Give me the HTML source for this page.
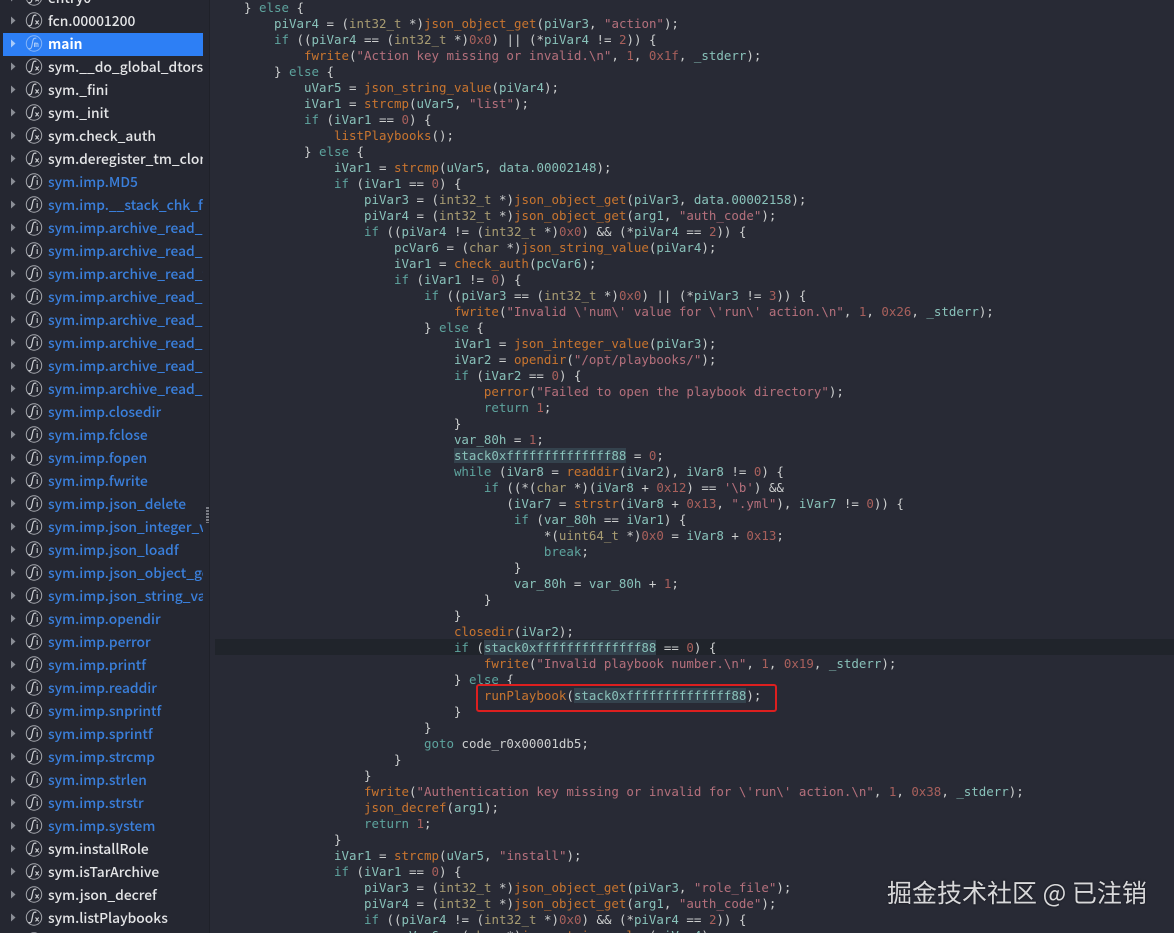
<!DOCTYPE html>
<html lang="en"><head><meta charset="utf-8"><title>Decompiler</title>
<style>
html,body{margin:0;padding:0;background:#282a35}
#app{position:relative;width:1174px;height:933px;overflow:hidden;background:#282a35}
#side{position:absolute;left:0;top:0;width:209px;height:933px;background:#252731;border-right:1px solid #1f2129}
#rows{position:absolute;left:0;top:-13px;width:203px;overflow:hidden}
.r{position:relative;height:23px;width:203px;font:500 13.8px/22px "Noto Sans CJK SC","Liberation Sans",sans-serif;color:#e4e5e7;white-space:nowrap;overflow:hidden}
.r span{position:absolute;left:48px;top:-1px}
.r svg{position:absolute;left:0;top:0}
.b{color:#3a7fdb}
.sel{background:#2d7ff5;margin-left:3px;width:200px;color:#fff;font-weight:700}
.sel span{left:45px}.sel svg{left:-3px}
#grip{position:absolute;left:206px;top:507px;width:3px;height:16px;background:repeating-linear-gradient(#7a7c84 0 2px,transparent 2px 3px)}
#hl{position:absolute;left:215px;top:639px;width:959px;height:16px;background:#20242b}
pre{position:absolute;left:244px;top:0;margin:0;font:12.46px/16px "DejaVu Sans Mono","Liberation Mono",monospace;color:#cdcfcf}
i{font-style:normal}
.v{color:#89c2ba}.k{color:#5ea49e}.f{color:#c9752f}.s{color:#b5707c}.n{color:#a8605c}.t{color:#a89c72}
.h{background:#34424d;color:#89c2ba}
#box{position:absolute;left:476px;top:684px;width:297px;height:24px;border:2px solid #dd1f1f;border-radius:3px}
#wm{position:absolute;left:887px;top:874px;font:25px/36px "Noto Sans CJK SC","Liberation Sans",sans-serif;color:#d8d8da;white-space:nowrap;text-shadow:0 0 2px rgba(0,0,0,.5)}
</style></head><body><div id="app">
<svg width="0" height="0" style="position:absolute">
<defs>
<g id="ar"><path d="M11 6.500l4.500 4-4.500 4z" fill="#8b8e96"/></g>
<g id="fx"><use href="#ar"/><circle cx="34" cy="10.500" r="7.700" fill="none" stroke="#a6a8ae" stroke-width="1"/><path d="M28.500 15.500c2.200 .8 3-.5 3.400-3l1-5c.4-2 1.500-2.800 3.500-2.200" fill="none" stroke="#d0d2d6" stroke-width="1.200"/><path d="M35.500 10.500l3.200 3.800M38.700 10.500l-3.200 3.800" fill="none" stroke="#d0d2d6" stroke-width="1.100"/></g>
<g id="fi"><use href="#ar"/><circle cx="34" cy="10.500" r="7.700" fill="none" stroke="#a6a8ae" stroke-width="1"/><path d="M28.500 15.500c2.200 .8 3-.5 3.400-3l1-5c.4-2 1.500-2.800 3.500-2.200" fill="none" stroke="#d0d2d6" stroke-width="1.200"/><path d="M37.200 9v5M37.200 6.500v1" fill="none" stroke="#d0d2d6" stroke-width="1.100"/></g>
<g id="fm"><path d="M11 6.500l4.500 4-4.500 4z" fill="#a9cbfa"/><circle cx="34" cy="10.500" r="7.700" fill="none" stroke="#86b5f8" stroke-width="1"/><path d="M28.500 15.500c2.200 .8 3-.5 3.400-3l1-5c.4-2 1.500-2.800 3.500-2.200M34.500 14v-3.800c1-.6 1.500 0 1.500 .8v3M36 10.500c1-.8 2-.3 2 .6v2.900" fill="none" stroke="#a9cbfa" stroke-width="1"/></g>
</defs></svg>
<div id="side"><div id="rows">
<div class="r"><svg width="50" height="23"><use href="#fx"/></svg><span>entry0</span></div>
<div class="r"><svg width="50" height="23"><use href="#fx"/></svg><span>fcn.00001200</span></div>
<div class="r sel"><svg width="50" height="23"><use href="#fm"/></svg><span>main</span></div>
<div class="r"><svg width="50" height="23"><use href="#fx"/></svg><span>sym.__do_global_dtors_aux</span></div>
<div class="r"><svg width="50" height="23"><use href="#fx"/></svg><span>sym._fini</span></div>
<div class="r"><svg width="50" height="23"><use href="#fx"/></svg><span>sym._init</span></div>
<div class="r"><svg width="50" height="23"><use href="#fx"/></svg><span>sym.check_auth</span></div>
<div class="r"><svg width="50" height="23"><use href="#fx"/></svg><span>sym.deregister_tm_clones</span></div>
<div class="r b"><svg width="50" height="23"><use href="#fi"/></svg><span>sym.imp.MD5</span></div>
<div class="r b"><svg width="50" height="23"><use href="#fi"/></svg><span>sym.imp.__stack_chk_fail</span></div>
<div class="r b"><svg width="50" height="23"><use href="#fi"/></svg><span>sym.imp.archive_read_data</span></div>
<div class="r b"><svg width="50" height="23"><use href="#fi"/></svg><span>sym.imp.archive_read_data</span></div>
<div class="r b"><svg width="50" height="23"><use href="#fi"/></svg><span>sym.imp.archive_read_free</span></div>
<div class="r b"><svg width="50" height="23"><use href="#fi"/></svg><span>sym.imp.archive_read_new</span></div>
<div class="r b"><svg width="50" height="23"><use href="#fi"/></svg><span>sym.imp.archive_read_next</span></div>
<div class="r b"><svg width="50" height="23"><use href="#fi"/></svg><span>sym.imp.archive_read_open</span></div>
<div class="r b"><svg width="50" height="23"><use href="#fi"/></svg><span>sym.imp.archive_read_supp</span></div>
<div class="r b"><svg width="50" height="23"><use href="#fi"/></svg><span>sym.imp.archive_read_supp</span></div>
<div class="r b"><svg width="50" height="23"><use href="#fi"/></svg><span>sym.imp.closedir</span></div>
<div class="r b"><svg width="50" height="23"><use href="#fi"/></svg><span>sym.imp.fclose</span></div>
<div class="r b"><svg width="50" height="23"><use href="#fi"/></svg><span>sym.imp.fopen</span></div>
<div class="r b"><svg width="50" height="23"><use href="#fi"/></svg><span>sym.imp.fwrite</span></div>
<div class="r b"><svg width="50" height="23"><use href="#fi"/></svg><span>sym.imp.json_delete</span></div>
<div class="r b"><svg width="50" height="23"><use href="#fi"/></svg><span>sym.imp.json_integer_value</span></div>
<div class="r b"><svg width="50" height="23"><use href="#fi"/></svg><span>sym.imp.json_loadf</span></div>
<div class="r b"><svg width="50" height="23"><use href="#fi"/></svg><span>sym.imp.json_object_get</span></div>
<div class="r b"><svg width="50" height="23"><use href="#fi"/></svg><span>sym.imp.json_string_value</span></div>
<div class="r b"><svg width="50" height="23"><use href="#fi"/></svg><span>sym.imp.opendir</span></div>
<div class="r b"><svg width="50" height="23"><use href="#fi"/></svg><span>sym.imp.perror</span></div>
<div class="r b"><svg width="50" height="23"><use href="#fi"/></svg><span>sym.imp.printf</span></div>
<div class="r b"><svg width="50" height="23"><use href="#fi"/></svg><span>sym.imp.readdir</span></div>
<div class="r b"><svg width="50" height="23"><use href="#fi"/></svg><span>sym.imp.snprintf</span></div>
<div class="r b"><svg width="50" height="23"><use href="#fi"/></svg><span>sym.imp.sprintf</span></div>
<div class="r b"><svg width="50" height="23"><use href="#fi"/></svg><span>sym.imp.strcmp</span></div>
<div class="r b"><svg width="50" height="23"><use href="#fi"/></svg><span>sym.imp.strlen</span></div>
<div class="r b"><svg width="50" height="23"><use href="#fi"/></svg><span>sym.imp.strstr</span></div>
<div class="r b"><svg width="50" height="23"><use href="#fi"/></svg><span>sym.imp.system</span></div>
<div class="r"><svg width="50" height="23"><use href="#fx"/></svg><span>sym.installRole</span></div>
<div class="r"><svg width="50" height="23"><use href="#fx"/></svg><span>sym.isTarArchive</span></div>
<div class="r"><svg width="50" height="23"><use href="#fx"/></svg><span>sym.json_decref</span></div>
<div class="r"><svg width="50" height="23"><use href="#fx"/></svg><span>sym.listPlaybooks</span></div>
<div class="r"><svg width="50" height="23"><use href="#fx"/></svg><span>sym.main</span></div>
</div></div>
<div id="grip"></div>
<div id="hl"></div>
<pre>} <i class="k">else</i> {
    <i class="v">piVar4</i> = (<i class="t">int32_t</i> *)<i class="f">json_object_get</i>(<i class="v">piVar3</i>, <i class="s">"action"</i>);
    <i class="k">if</i> ((<i class="v">piVar4</i> == (<i class="t">int32_t</i> *)<i class="n">0x0</i>) || (*<i class="v">piVar4</i> != <i class="n">2</i>)) {
        <i class="f">fwrite</i>(<i class="s">"Action key missing or invalid.\n"</i>, <i class="n">1</i>, <i class="n">0x1f</i>, <i class="v">_stderr</i>);
    } <i class="k">else</i> {
        <i class="v">uVar5</i> = <i class="f">json_string_value</i>(<i class="v">piVar4</i>);
        <i class="v">iVar1</i> = <i class="f">strcmp</i>(<i class="v">uVar5</i>, <i class="s">"list"</i>);
        <i class="k">if</i> (<i class="v">iVar1</i> == <i class="n">0</i>) {
            <i class="f">listPlaybooks</i>();
        } <i class="k">else</i> {
            <i class="v">iVar1</i> = <i class="f">strcmp</i>(<i class="v">uVar5</i>, <i class="v">data.00002148</i>);
            <i class="k">if</i> (<i class="v">iVar1</i> == <i class="n">0</i>) {
                <i class="v">piVar3</i> = (<i class="t">int32_t</i> *)<i class="f">json_object_get</i>(<i class="v">piVar3</i>, <i class="v">data.00002158</i>);
                <i class="v">piVar4</i> = (<i class="t">int32_t</i> *)<i class="f">json_object_get</i>(<i class="v">arg1</i>, <i class="s">"auth_code"</i>);
                <i class="k">if</i> ((<i class="v">piVar4</i> != (<i class="t">int32_t</i> *)<i class="n">0x0</i>) &amp;&amp; (*<i class="v">piVar4</i> == <i class="n">2</i>)) {
                    <i class="v">pcVar6</i> = (<i class="t">char</i> *)<i class="f">json_string_value</i>(<i class="v">piVar4</i>);
                    <i class="v">iVar1</i> = <i class="f">check_auth</i>(<i class="v">pcVar6</i>);
                    <i class="k">if</i> (<i class="v">iVar1</i> != <i class="n">0</i>) {
                        <i class="k">if</i> ((<i class="v">piVar3</i> == (<i class="t">int32_t</i> *)<i class="n">0x0</i>) || (*<i class="v">piVar3</i> != <i class="n">3</i>)) {
                            <i class="f">fwrite</i>(<i class="s">"Invalid \'num\' value for \'run\' action.\n"</i>, <i class="n">1</i>, <i class="n">0x26</i>, <i class="v">_stderr</i>);
                        } <i class="k">else</i> {
                            <i class="v">iVar1</i> = <i class="f">json_integer_value</i>(<i class="v">piVar3</i>);
                            <i class="v">iVar2</i> = <i class="f">opendir</i>(<i class="s">"/opt/playbooks/"</i>);
                            <i class="k">if</i> (<i class="v">iVar2</i> == <i class="n">0</i>) {
                                <i class="f">perror</i>(<i class="s">"Failed to open the playbook directory"</i>);
                                <i class="k">return</i> <i class="n">1</i>;
                            }
                            <i class="v">var_80h</i> = <i class="n">1</i>;
                            <i class="h">stack0xffffffffffffff88</i> = <i class="n">0</i>;
                            <i class="k">while</i> (<i class="v">iVar8</i> = <i class="f">readdir</i>(<i class="v">iVar2</i>), <i class="v">iVar8</i> != <i class="n">0</i>) {
                                <i class="k">if</i> ((*(<i class="t">char</i> *)(<i class="v">iVar8</i> + <i class="n">0x12</i>) == <i class="s">'\b'</i>) &amp;&amp;
                                   (<i class="v">iVar7</i> = <i class="f">strstr</i>(<i class="v">iVar8</i> + <i class="n">0x13</i>, <i class="s">".yml"</i>), <i class="v">iVar7</i> != <i class="n">0</i>)) {
                                    <i class="k">if</i> (<i class="v">var_80h</i> == <i class="v">iVar1</i>) {
                                        *(<i class="t">uint64_t</i> *)<i class="n">0x0</i> = <i class="v">iVar8</i> + <i class="n">0x13</i>;
                                        <i class="k">break</i>;
                                    }
                                    <i class="v">var_80h</i> = <i class="v">var_80h</i> + <i class="n">1</i>;
                                }
                            }
                            <i class="f">closedir</i>(<i class="v">iVar2</i>);
                            <i class="k">if</i> (<i class="h">stack0xffffffffffffff88</i> == <i class="n">0</i>) {
                                <i class="f">fwrite</i>(<i class="s">"Invalid playbook number.\n"</i>, <i class="n">1</i>, <i class="n">0x19</i>, <i class="v">_stderr</i>);
                            } <i class="k">else</i> {
                                <i class="f">runPlaybook</i>(<i class="h">stack0xffffffffffffff88</i>);
                            }
                        }
                        <i class="k">goto</i> code_r0x00001db5;
                    }
                }
                <i class="f">fwrite</i>(<i class="s">"Authentication key missing or invalid for \'run\' action.\n"</i>, <i class="n">1</i>, <i class="n">0x38</i>, <i class="v">_stderr</i>);
                <i class="f">json_decref</i>(<i class="v">arg1</i>);
                <i class="k">return</i> <i class="n">1</i>;
            }
            <i class="v">iVar1</i> = <i class="f">strcmp</i>(<i class="v">uVar5</i>, <i class="s">"install"</i>);
            <i class="k">if</i> (<i class="v">iVar1</i> == <i class="n">0</i>) {
                <i class="v">piVar3</i> = (<i class="t">int32_t</i> *)<i class="f">json_object_get</i>(<i class="v">piVar3</i>, <i class="s">"role_file"</i>);
                <i class="v">piVar4</i> = (<i class="t">int32_t</i> *)<i class="f">json_object_get</i>(<i class="v">arg1</i>, <i class="s">"auth_code"</i>);
                <i class="k">if</i> ((<i class="v">piVar4</i> != (<i class="t">int32_t</i> *)<i class="n">0x0</i>) &amp;&amp; (*<i class="v">piVar4</i> == <i class="n">2</i>)) {
                    <i class="v">pcVar6</i> = (<i class="t">char</i> *)<i class="f">json_string_value</i>(<i class="v">piVar4</i>);</pre>
<div id="box"></div>
<div id="wm">掘金技术社区 @ 已注销</div>
</div></body></html>
